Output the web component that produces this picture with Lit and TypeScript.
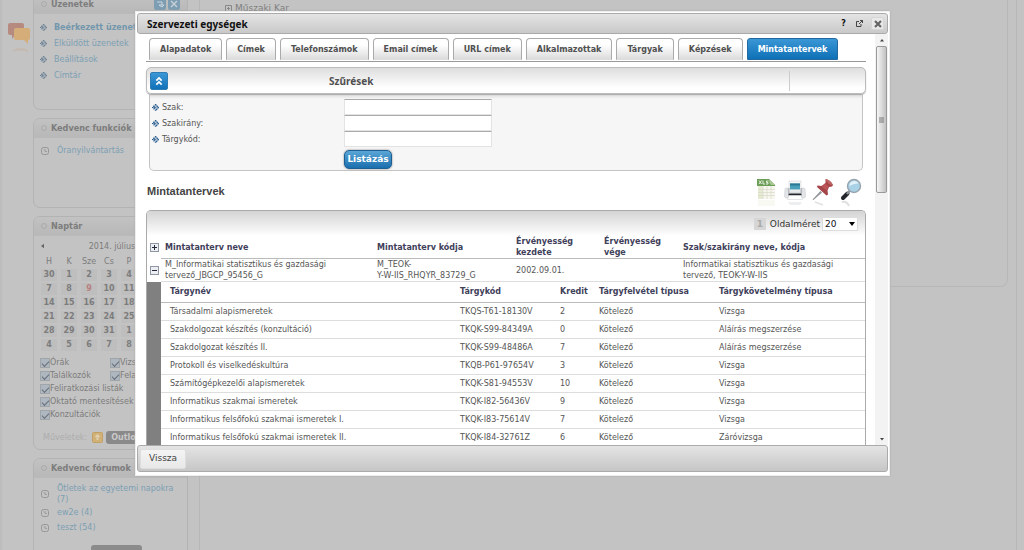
import { LitElement, html, css, svg, nothing } from "lit";
import { customElement } from "lit/decorators.js";
import { classMap } from "lit/directives/class-map.js";

const TABS = ["Alapadatok", "Címek", "Telefonszámok", "Email címek", "URL címek", "Alkalmazottak", "Tárgyak", "Képzések", "Mintatantervek"];

const FILTERS = [
  { id: "szak", label: "Szak:" },
  { id: "szakirany", label: "Szakirány:" },
  { id: "targykod", label: "Tárgykód:" },
];

const SUBJECTS = [
  ["Társadalmi alapismeretek", "TKQS-T61-18130V", "2", "Kötelező", "Vizsga"],
  ["Szakdolgozat készítés (konzultáció)", "TKQK-S99-84349A", "0", "Kötelező", "Aláírás megszerzése"],
  ["Szakdolgozat készítés II.", "TKQK-S99-48486A", "7", "Kötelező", "Aláírás megszerzése"],
  ["Protokoll és viselkedéskultúra", "TKQB-P61-97654V", "3", "Kötelező", "Vizsga"],
  ["Számítógépkezelői alapismeretek", "TKQK-S81-94553V", "10", "Kötelező", "Vizsga"],
  ["Informatikus szakmai ismeretek", "TKQK-I82-56436V", "9", "Kötelező", "Vizsga"],
  ["Informatikus felsőfokú szakmai ismeretek I.", "TKQK-I83-75614V", "7", "Kötelező", "Vizsga"],
  ["Informatikus felsőfokú szakmai ismeretek II.", "TKQK-I84-32761Z", "6", "Kötelező", "Záróvizsga"],
];

const WEEKS = [
  [30, 1, 2, 3, 4, 5, 6],
  [7, 8, 9, 10, 11, 12, 13],
  [14, 15, 16, 17, 18, 19, 20],
  [21, 22, 23, 24, 25, 26, 27],
  [28, 29, 30, 31, 1, 2, 3],
  [4, 5, 6, 7, 8, 9, 10],
];

const diamond = html`<svg class="diamond" viewBox="0 0 8 8" width="7" height="7" aria-hidden="true">
  <path d="M4 0 8 4 4 8 0 4Z" fill="currentColor" opacity=".35" />
  <path d="M3.500 0 7.500 4 3.500 8M1.500 2 3.500 4 1.500 6" fill="none" stroke="currentColor" stroke-width="1.300" stroke-dasharray="2 .6" />
  <path d="M0 3.500h1.500v1H0z" fill="currentColor" />
</svg>`;

const clock = html`<svg class="clock" viewBox="0 0 8 8" width="8" height="8" aria-hidden="true">
  <rect x=".5" y=".5" width="7" height="7" rx="2" fill="none" stroke="#969696" />
  <path d="M4 2v2.500h2M2.500 2.500l1 1" fill="none" stroke="#969696" stroke-width=".8" />
</svg>`;

const expander = (open: boolean) => html`<svg viewBox="0 0 9 9" width="9" height="9" aria-hidden="true">
  <rect x=".5" y=".5" width="8" height="8" fill="#eceef2" stroke="#8f96a5" />
  <path d="M2 4.500h5" stroke="#222a3c" stroke-width="1" />
  ${open ? nothing : svg`<path d="M4.500 2v5" stroke="#222a3c" stroke-width="1" />`}
</svg>`;

const xlsIcon = html`<svg viewBox="0 0 22 30" width="22" height="30" aria-hidden="true">
  <path d="M2 7h17v14H2z" fill="#f8f7ef" />
  <path d="M2 7h5v14H2z" fill="#e6ead0" />
  <path d="M2 11.500h17M2 14.500h17M2 17.500h17M7 8v13M11 8v13M15 8v13" stroke="#d9dccb" stroke-width=".8" />
  <path d="M1 1h12l6 6v1H1z" fill="#6c9e58" />
  <path d="M13 1l6 6h-4q-2-2-2-6z" fill="#a8c896" />
  <path d="M3 2.500l2.500 3.500M5.500 2.500 3 6M7 2.500V6h2M12.500 3H10.500v1.500h1.500V6H10" stroke="#f1f7ee" stroke-width=".9" fill="none" />
  <path d="M2 22h17v6H2z" fill="#efefe4" opacity=".4" />
</svg>`;

const printIcon = html`<svg viewBox="0 0 22 30" width="22" height="30" aria-hidden="true">
  <path d="M5 3h12v10H5z" fill="#f6f6f6" stroke="#c9ccd0" stroke-width=".5" />
  <path d="M6 5.500h10v6H6z" fill="#4aa0b8" />
  <path d="M6 5.500h10v2H6z" fill="#2a7894" />
  <path d="M1 11q0-1 1.500-1H4v4h14v-4h1.500q1.500 0 1.500 1l.5 7q0 2-2 2h-17q-2 0-2-2z" fill="#e3e5e8" stroke="#c3c6ca" stroke-width=".5" />
  <path d="M4 10h1.500v5H4zM16.500 10H18v5h-1.500z" fill="#b6bac0" />
  <path d="M4.500 15.500h13v2h-13z" fill="#22262c" />
  <path d="M5 17.500h12l1.500 4h-15z" fill="#fff" stroke="#c9ccd0" stroke-width=".5" />
  <path d="M4 24h14l-2 3H6z" fill="#dcdee0" opacity=".5" />
</svg>`;

const pinIcon = html`<svg viewBox="0 0 22 30" width="22" height="30" aria-hidden="true">
  <path d="M8.500 13 .5 21.500l1 .5L10 14.500z" fill="#8f9296" />
  <path d="M13.500 1q5 1 7.500 6l-1 1.500-3 .5-1.500 3.500.5 4-1.500 1L5 9l.5-1.500 4 .5 4-3z" fill="#a5454a" />
  <path d="M13.500 1q5 1 7.500 6-2 .5-4.500-1.500T13.500 1z" fill="#bf6467" />
  <path d="M13 5.500l3.500 3-2 4L10 9z" fill="#bb5558" />
  <path d="M3 24l8 3" stroke="#e2e2e2" stroke-width="1.500" />
</svg>`;

const searchIcon = html`<svg viewBox="0 0 22 30" width="22" height="30" aria-hidden="true">
  <path d="M7.500 15.500 3 20" stroke="#23272c" stroke-width="4" stroke-linecap="round" />
  <path d="M10 12.500 7 16" stroke="#8b9197" stroke-width="2.500" />
  <circle cx="14" cy="8" r="6.500" fill="#a9d2e6" stroke="#97a3ad" stroke-width="1.400" />
  <path d="M9.500 8q0-4.500 4.500-5 3.500 0 4.500 2.500-4.500-.5-9 2.500z" fill="#e3f2f9" />
  <path d="M2 24q5-1 7 4" stroke="#cfd1d4" stroke-width="2" fill="none" opacity=".7" />
</svg>`;

@customElement("app-root")
export class AppRoot extends LitElement {
  static styles = css`
    :host {
      display: block;
      height: 100vh;
      overflow: hidden;
      position: relative;
      background: #c3c3c3;
      font: 8px/11px "DejaVu Sans", Verdana, sans-serif;
      color: #555;
    }
    * { box-sizing: border-box; }
    svg { display: block; flex: none; }
    button, input, select { font: inherit; color: inherit; margin: 0; padding: 0; border: 0; background: none; }
    a { text-decoration: none; color: inherit; }
    ul { list-style: none; margin: 0; padding: 0; }
    h1, h2, h3 { margin: 0; }
    table { border-collapse: collapse; width: 100%; }
    th, td { padding: 0; text-align: left; }

    .page { display: flex; margin-top: -6px; min-height: 100%; color: #7f7f7f; }
    .rail { width: 33px; padding: 28px 0 0 6px; border-left: 2px solid #bdbdbd; }
    .side { width: 155px; display: flex; flex-direction: column; gap: 8px; }
    .main { flex: 1; display: flex; padding-right: 6px; margin-left: 11px; border-left: 1px solid #b7b7b7; }
    .tree { flex: 1; height: 293px; margin-right: 8px; padding: 9px 25px; border: 1px solid #b7b7b7; border-width: 0 1px 1px 0; border-radius: 0 0 8px 0; font-size: 9px; }
    .tree div { display: flex; gap: 3px; align-items: center; }
    .edge { width: 2px; border-left: 1px solid #b7b7b7; }

    .panel { border: 1px solid #b3b3b3; border-radius: 7px; color: #7c7c7c; }
    .panel-head { display: flex; align-items: center; height: 19px; padding: 0 7px; gap: 4px; background: linear-gradient(#c2c2c2, #b8b8b8); border-bottom: 1px solid #bababa; border-radius: 6px 6px 0 0; }
    .panel-head h2 { flex: 1; font: bold 9px/14px "DejaVu Sans Condensed", "DejaVu Sans", sans-serif; color: #7c7c7c; white-space: nowrap; }
    .ring { width: 6px; height: 6px; border: 1px solid #aaa; border-radius: 50%; }
    .mini { width: 12px; height: 12px; background: #7d9db3; border-radius: 2px; }
    .mini + .mini { margin-left: -2px; }
    .p1 { height: 116px; }
    .p2 { height: 90px; }
    .p3 { height: 234px; }
    .p4 { height: 120px; }
    .links { padding: 5px 6px; color: #7c9fb3; }
    .links li { display: flex; align-items: center; height: 16px; gap: 7px; white-space: nowrap; }
    .links .diamond { color: #6d8597; }
    .links li.first { font-weight: bold; color: #7297ac; }
    .fav { padding: 5px 7px; color: #7c9fb3; }
    .fav li { display: flex; align-items: center; gap: 8px; min-height: 15px; }

    .month { display: flex; padding: 5px 7px 0; height: 19px; }
    .month span { flex: 1; text-align: center; }
    .cal { margin: 0 5px; width: 140px; table-layout: fixed; }
    .cal th { font-weight: normal; text-align: center; height: 13px; }
    .cal td { text-align: center; font-weight: bold; height: 14px; line-height: 12px; padding: 1px 2px; }
    .cal td span { display: block; background: #bebebe; }
    .cal td .today { color: #b98080; }
    .checks { display: grid; grid-template-columns: 70px 1fr; padding: 4px 6px 0; overflow: hidden; }
    .checks label { display: flex; align-items: center; height: 13px; white-space: nowrap; }
    .checks .wide { grid-column: 1 / 3; }
    .checks input { appearance: none; width: 10px; height: 10px; flex: none; background: #aeb6bf; border: 1px solid #a0a5aa; display: grid; place-items: center; }
    .checks input::after { content: ""; width: 6px; height: 3px; border: solid #666f79; border-width: 0 0 1px 1px; transform: rotate(-45deg); }
    .ops { display: flex; align-items: center; gap: 3px; padding: 10px 9px; color: #adadad; }
    .ops .export { margin-left: 2px; }
    .ops button { background: #8a8a8a; color: #c9c9c9; height: 13px; padding: 0 5px; border-radius: 3px; font-weight: bold; }
    .forum { padding: 5px 7px; color: #7c9fb3; }
    .forum li { display: flex; align-items: center; gap: 8px; min-height: 15px; }
    .more { display: block; width: 51px; height: 13px; margin: 5px 0 0 57px; background: #8b8b8b; border-radius: 3px; }

    .overlay { position: absolute; inset: 0; display: flex; padding: 11px 134px 74px 135px; }
    .dialog { flex: 1; min-width: 0; display: flex; flex-direction: column; background: #fff; padding: 1px 1px 3px; border: 1px solid #eee; box-shadow: 0 0 2px #aaa; }
    .title { display: flex; align-items: center; gap: 10px; height: 21px; padding: 0 3px 0 9px; border: 1px solid #aaa; border-radius: 3px; background: linear-gradient(#e4e4e4, #c9c9c9); color: #111; }
    .title h1 { flex: 1; font: bold 10px/14px "Noto Sans", sans-serif; }
    .title button { display: grid; place-items: center; font-weight: bold; }
    .title .close { width: 13px; height: 13px; margin-left: -2px; background: #e9e9e9; border: 1px solid #d6d6d6; border-radius: 2px; }
    .foot { height: 27px; display: flex; align-items: center; padding: 0 2px; border: 1px solid #aaa; border-radius: 3px; background: linear-gradient(#e4e4e4, #c6c6c6); }
    .foot button { height: 20px; padding: 0 8px; font-size: 9px; color: #444; background: linear-gradient(#f4f4f4, #e8e8e8); border: 1px solid #dedede; border-radius: 2px; }
    .body { flex: 1; min-height: 0; display: flex; }
    .view { flex: 1; min-width: 0; overflow: hidden; padding: 4px 9px 0; }
    .bar { width: 13px; display: flex; flex-direction: column; align-items: center; background: #f3f3f3; }
    .bar svg { height: 12px; }
    .thumb { width: 11px; height: 147px; border: 1px solid #999; border-radius: 2px; background: linear-gradient(90deg, #f6f6f6, #dcdcdc 50%, #c2c2c4); display: grid; place-items: center; }
    .track { flex: 1; }

    .tabs { display: flex; gap: 4px; padding: 0 3px 1px; border-bottom: 1px solid #999; }
    .tabs button { height: 22px; padding: 0 10px; font-weight: bold; color: #505050; background: linear-gradient(#fff 30%, #dcdcdc); border: 1px solid #aaa; border-bottom-color: #ddd; border-radius: 4px 4px 0 0; white-space: nowrap; }
    .tabs .active { color: #fff; background: linear-gradient(#3b97d6, #0e70b6); border-color: #2269a0; border-radius: 3px 3px 0 0; }

    .filter-bar { display: flex; align-items: center; height: 27px; margin-top: 5px; padding: 0 3px; border: 1px solid #bbb; border-radius: 5px; background: linear-gradient(#dedede, #fff 80%); position: relative; box-shadow: 0 1px 1px #aaa; }
    .filter-bar h2 { flex: 1; margin-left: 161px; font: bold 10px/14px "Noto Sans", sans-serif; color: #505050; }
    .collapse { width: 18px; height: 18px; background: linear-gradient(#3b97d6, #1272b8); border-radius: 2px; border: 1px solid #2f7db5; display: grid; place-items: center; }
    .split { width: 73px; height: 20px; border-left: 1px solid #ccc; }
    .filters { margin: 0 3px; padding: 5px 2px 1px; border: 1px solid #c4c4c4; border-top: 0; border-radius: 0 0 5px 5px; background: linear-gradient(#dadada, #f6f6f6 5px); }
    .field { display: grid; grid-template-columns: 192px 148px; align-items: center; }
    .field label { display: flex; gap: 3px; align-items: center; }
    .field .diamond { color: #2b5e90; }
    .field input { height: 16px; background: #fff; border: 1px solid #e3e3e3; border-top-color: #aaa; }
    .submit { display: block; margin: 3px 0 0 192px; width: 48px; height: 19px; font-size: 9px; font-weight: bold; color: #fff; background: linear-gradient(#5aa6d6, #1b6fae); border: 1px solid #1d5f93; border-radius: 5px; box-shadow: 0 0 2px #777; }

    .list-head { display: flex; align-items: center; justify-content: space-between; height: 39px; padding: 0 4px 0 1px; }
    .list-head h2 { font: bold 11px/14px "Liberation Sans", Arial, sans-serif; color: #444; }
    .tools { display: flex; gap: 6px; padding-top: 4px; }
    .grid { border: 1px solid #aaa; border-bottom: 0; border-radius: 5px 5px 0 0; }
    .pager { display: flex; align-items: center; justify-content: flex-end; gap: 2px; height: 25px; padding-right: 7px; background: linear-gradient(#d4d4d4, #fff); border-radius: 4px 4px 0 0; font: 9px/12px "DejaVu Sans", sans-serif; color: #333; }
    .pager .num { width: 12px; margin-right: 2px; background: #d6d6d6; color: #aaa; text-align: center; font-weight: bold; }
    .pager .pick { display: flex; position: relative; align-items: center; }
    .pager select { appearance: none; width: 36px; height: 14px; padding-left: 2px; background: #fff; border: 1px solid #ddd; color: #111; }
    .pager .pick svg { position: absolute; right: 3px; pointer-events: none; }

    .plans { table-layout: fixed; }
    .plans > thead th { height: 22px; color: #40405a; border-bottom: 1px solid #bbb; }
    .plans > tbody > tr > td { height: 22px; border-bottom: 1px solid #ddd; }
    .plans > thead .toggle, .plans > tbody > tr > .toggle { border-bottom: 0; padding-left: 3px; }
    .plans .c0 { width: 14px; }
    .plans .lead { padding-left: 4px; }
    .plans .c1 { width: 216px; }
    .plans .c2 { width: 139px; }
    .plans .c3 { width: 88px; }
    .plans .c4 { width: 79px; }
    .plans > tbody > tr > .gutter { background: #808080; border-bottom: 0; }
    .plans > tbody > tr > .inner { border-bottom: 0; }
    .subjects { table-layout: fixed; }
    .subjects th { height: 20px; color: #40405a; border-bottom: 1px solid #bbb; }
    .subjects td { height: 18px; border-bottom: 1px solid #ddd; white-space: nowrap; }
    .subjects .s0 { width: 299px; }
    .subjects .s1 { width: 100px; }
    .subjects .s2 { width: 39px; }
    .subjects .s3 { width: 120px; }
    .subjects .name { padding-left: 9px; }
  `;

  private background() {
    return html`<div class="page">
      <nav class="rail" aria-label="Üzenetek">
        <svg viewBox="0 0 24 32" width="24" height="32" opacity=".8">
          <path d="M2 1h12q2 0 2 2v8q0 2-2 2H7l-3 4v-4H2q-2 0-2-2V3q0-2 2-2z" fill="#b37d6f" />
          <path d="M8 6h12q2 0 2 2v8q0 2-2 2v4l-4-4H8q-2 0-2-2V8q0-2 2-2z" fill="#d9a867" />
          <path d="M5 28q8-4 15 0v2q-8-3-15 0z" fill="#c9b09a" opacity=".5" />
        </svg>
      </nav>
      <aside class="side">
        <section class="panel p1">
          <div class="panel-head"><span class="ring"></span><h2>Üzenetek</h2>
            <svg class="mini" viewBox="0 0 12 12"><path d="M3 4h5v3M8 9 5 7h5z" stroke="#ccd6dd" fill="none" /></svg>
            <svg class="mini" viewBox="0 0 12 12"><path d="M3 3l6 6M9 3 3 9" stroke="#c4ced6" stroke-width="1.500" /></svg>
          </div>
          <ul class="links">
            ${["Beérkezett üzenetek", "Elküldött üzenetek", "Beállítások", "Címtár"].map(
              (t, i) => html`<li class=${classMap({ first: i === 0 })}>${diamond}<a href="#">${t}</a></li>`,
            )}
          </ul>
        </section>
        <section class="panel p2">
          <div class="panel-head"><span class="ring"></span><h2>Kedvenc funkciók</h2></div>
          <ul class="fav"><li>${clock}<a href="#">Óranyilvántartás</a></li></ul>
        </section>
        <section class="panel p3">
          <div class="panel-head"><span class="ring"></span><h2>Naptár</h2></div>
          <div class="month"><svg viewBox="0 0 4 6" width="3" height="10"><path d="M4 0v6L0 3z" fill="#666" /></svg><span>2014. július</span></div>
          <table class="cal">
            <thead><tr>${["H", "K", "Sze", "Cs", "P", "Szo", "V"].map((d) => html`<th>${d}</th>`)}</tr></thead>
            <tbody>
              ${WEEKS.map((w, i) => html`<tr>${w.map((d) => html`<td><span class=${classMap({ today: i === 1 && d === 9 })}>${d}</span></td>`)}</tr>`)}
            </tbody>
          </table>
          <div class="checks">
            <label><input type="checkbox" checked />Órák</label>
            <label><input type="checkbox" checked />Vizsgák</label>
            <label><input type="checkbox" checked />Találkozók</label>
            <label><input type="checkbox" checked />Feladatok</label>
            <label class="wide"><input type="checkbox" checked />Feliratkozási listák</label>
            <label class="wide"><input type="checkbox" checked />Oktató mentesítések</label>
            <label class="wide"><input type="checkbox" checked />Konzultációk</label>
          </div>
          <div class="ops">Műveletek:
            <svg class="export" viewBox="0 0 11 11" width="11" height="11"><rect x=".5" y=".5" width="10" height="10" rx="1" fill="#d2b176" stroke="#c2a167" /><path d="M5.500 2 8.500 5h-2v3h-2V5h-2z" fill="#dfd0b0" /></svg>
            <button>Outlook</button></div>
        </section>
        <section class="panel p4">
          <div class="panel-head"><span class="ring"></span><h2>Kedvenc fórumok</h2></div>
          <ul class="forum">
            ${["Ötletek az egyetemi napokra (7)", "ew2e (4)", "teszt (54)"].map((t) => html`<li>${clock}<a href="#">${t}</a></li>`)}
          </ul>
          <button class="more" aria-label="Tovább"></button>
        </section>
      </aside>
      <main class="main">
        <div class="tree"><div><svg viewBox="0 0 7 7" width="7" height="7"><path d="M.5.500h6v6h-6zM2 3.500h3M3.500 2v3" stroke="#888" fill="none" /></svg>Műszaki Kar</div></div>
        <div class="edge"></div>
      </main>
    </div>`;
  }

  private subjects() {
    return html`<table class="subjects">
      <thead>
        <tr>
          <th class="s0 name">Tárgynév</th><th class="s1">Tárgykód</th><th class="s2">Kredit</th>
          <th class="s3">Tárgyfelvétel típusa</th><th>Tárgykövetelmény típusa</th>
        </tr>
      </thead>
      <tbody>
        ${SUBJECTS.map((row) => html`<tr>${row.map((cell, i) => html`<td class=${classMap({ name: i === 0 })}>${cell}</td>`)}</tr>`)}
      </tbody>
    </table>`;
  }

  render() {
    return html`
      ${this.background()}
      <div class="overlay">
        <div class="dialog" role="dialog" aria-labelledby="dlg-title">
          <header class="title">
            <h1 id="dlg-title">Szervezeti egységek</h1>
            <button aria-label="Súgó">?</button>
            <button aria-label="Új ablak">
              <svg viewBox="0 0 7 7" width="7" height="7"><path d="M3 1.500H.5v5h4.500V4M4 .500h2.500V3M6.500.500 3 4" fill="none" stroke="#444" /></svg>
            </button>
            <button class="close" aria-label="Bezárás">
              <svg viewBox="0 0 8 8" width="8" height="8"><path d="M1 1l6 6M7 1 1 7" stroke="#666" stroke-width="2.200" /></svg>
            </button>
          </header>
          <div class="body">
            <div class="view">
              <nav class="tabs">
                ${TABS.map((t, i) => html`<button class=${classMap({ active: i === TABS.length - 1 })}>${t}</button>`)}
              </nav>
              <div class="filter-bar">
                <button class="collapse" aria-label="Összecsukás">
                  <svg viewBox="0 0 9 11" width="8" height="10"><path d="M1.500 5l3-3 3 3M1.500 9.500l3-3 3 3" fill="none" stroke="#fff" stroke-width="2" /></svg>
                </button>
                <h2>Szűrések</h2>
                <span class="split"></span>
              </div>
              <form class="filters">
                ${FILTERS.map((f) => html`<div class="field"><label for=${f.id}>${diamond}${f.label}</label><input id=${f.id} type="text" /></div>`)}
                <button class="submit" type="button">Listázás</button>
              </form>
              <div class="list-head">
                <h2>Mintatantervek</h2>
                <div class="tools">
                  <a href="#" aria-label="Excel">${xlsIcon}</a><a href="#" aria-label="Nyomtatás">${printIcon}</a>
                  <a href="#" aria-label="Kitűzés">${pinIcon}</a><a href="#" aria-label="Keresés">${searchIcon}</a>
                </div>
              </div>
              <div class="grid">
                <div class="pager">
                  <span class="num">1</span><label for="size">Oldalméret</label>
                  <span class="pick"><select id="size"><option>20</option></select>
                    <svg viewBox="0 0 6 4" width="6" height="4"><path d="M0 0h6L3 4z" fill="#000" /></svg></span>
                </div>
                <table class="plans">
                  <thead>
                    <tr>
                      <th class="c0 toggle">${expander(false)}</th>
                      <th class="c1 lead">Mintatanterv neve</th><th class="c2">Mintatanterv kódja</th>
                      <th class="c3">Érvényesség<br />kezdete</th><th class="c4">Érvényesség<br />vége</th>
                      <th>Szak/szakirány neve, kódja</th>
                    </tr>
                  </thead>
                  <tbody>
                    <tr>
                      <td class="toggle">${expander(true)}</td>
                      <td class="lead">M_Informatikai statisztikus és gazdasági<br />tervező_JBGCP_95456_G</td>
                      <td>M_TEOK-<br />Y-W-IIS_RHQYR_83729_G</td>
                      <td>2002.09.01.</td><td></td>
                      <td>Informatikai statisztikus és gazdasági<br />tervező, TEOK-Y-W-IIS</td>
                    </tr>
                    <tr><td class="gutter"></td><td class="inner" colspan="5">${this.subjects()}</td></tr>
                  </tbody>
                </table>
              </div>
            </div>
            <div class="bar" aria-hidden="true">
              <svg viewBox="0 0 12 12" width="12"><path d="M4 7.500h4L6 5z" fill="#444" /></svg>
              <div class="thumb"><svg viewBox="0 0 5 7" width="5" height="7"><path d="M0 1.500h5M0 3.500h5M0 5.500h5" stroke="#777" /></svg></div>
              <div class="track"></div>
              <svg viewBox="0 0 12 12" width="12"><path d="M4 5h4L6 7.500z" fill="#444" /></svg>
            </div>
          </div>
          <footer class="foot"><button>Vissza</button></footer>
        </div>
      </div>
    `;
  }
}
